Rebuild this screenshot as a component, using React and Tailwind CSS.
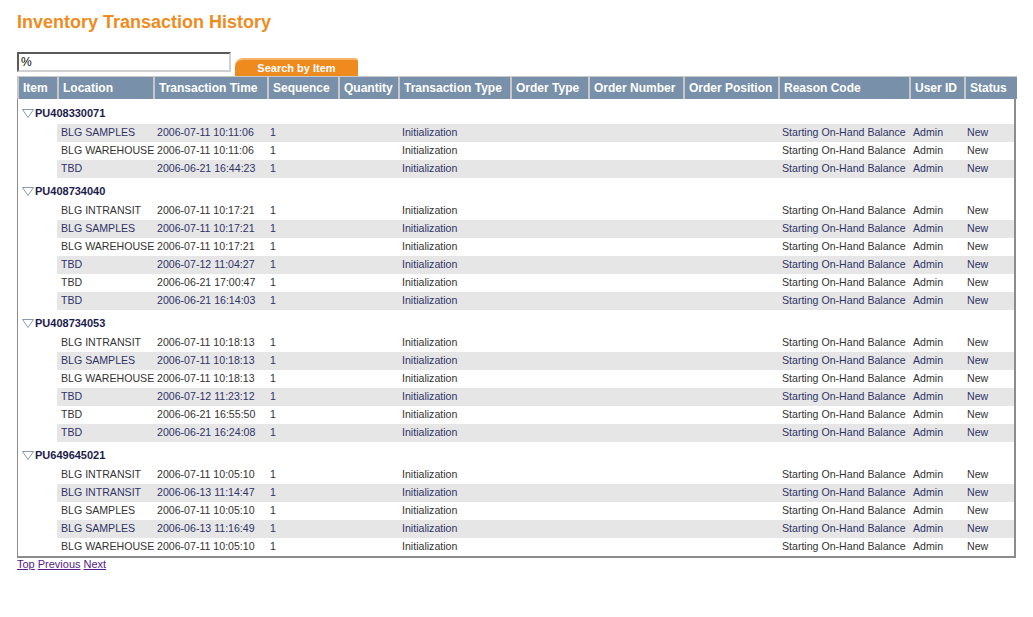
import React from "react";

const columns = [
    { label: "Item", w: 40 },
    { label: "Location", w: 96 },
    { label: "Transaction Time", w: 114 },
    { label: "Sequence", w: 71 },
    { label: "Quantity", w: 60 },
    { label: "Transaction Type", w: 112 },
    { label: "Order Type", w: 78 },
    { label: "Order Number", w: 95 },
    { label: "Order Position", w: 95 },
    { label: "Reason Code", w: 131 },
    { label: "User ID", w: 55 },
    { label: "Status", w: 52 },
];

const groups = [
    {
        item: "PU408330071",
        rows: [
            ["BLG SAMPLES", "2006-07-11 10:11:06"],
            ["BLG WAREHOUSE", "2006-07-11 10:11:06"],
            ["TBD", "2006-06-21 16:44:23"],
        ],
    },
    {
        item: "PU408734040",
        rows: [
            ["BLG INTRANSIT", "2006-07-11 10:17:21"],
            ["BLG SAMPLES", "2006-07-11 10:17:21"],
            ["BLG WAREHOUSE", "2006-07-11 10:17:21"],
            ["TBD", "2006-07-12 11:04:27"],
            ["TBD", "2006-06-21 17:00:47"],
            ["TBD", "2006-06-21 16:14:03"],
        ],
    },
    {
        item: "PU408734053",
        rows: [
            ["BLG INTRANSIT", "2006-07-11 10:18:13"],
            ["BLG SAMPLES", "2006-07-11 10:18:13"],
            ["BLG WAREHOUSE", "2006-07-11 10:18:13"],
            ["TBD", "2006-07-12 11:23:12"],
            ["TBD", "2006-06-21 16:55:50"],
            ["TBD", "2006-06-21 16:24:08"],
        ],
    },
    {
        item: "PU649645021",
        rows: [
            ["BLG INTRANSIT", "2006-07-11 10:05:10"],
            ["BLG INTRANSIT", "2006-06-13 11:14:47"],
            ["BLG SAMPLES", "2006-07-11 10:05:10"],
            ["BLG SAMPLES", "2006-06-13 11:16:49"],
            ["BLG WAREHOUSE", "2006-07-11 10:05:10"],
        ],
    },
];

// body sits inside a 1px left / 2px right border, so trim the outer columns
const bodyWidths = columns.map((c, i) => (i === 0 ? c.w - 1 : i === columns.length - 1 ? c.w - 2 : c.w));

function Triangle() {
    return (
        <svg width="12" height="9" viewBox="0 0 12 9" className="shrink-0">
            <polygon points="0.5,0.5 11.5,0.5 6,8.5" fill="none" stroke="#8a97b0" strokeWidth="1" />
        </svg>
    );
}

export default function App() {
    let idx = 0;
    return (
        <div className="min-h-[617px] bg-white pl-[17px] pt-[10px] font-['Liberation_Sans',Arial,sans-serif]">
            {/* Title */}
            <h1 className="text-[18px] leading-[24px] font-bold text-[#f08c1e]">Inventory Transaction History</h1>

            {/* Search */}
            <div className="mt-[18px] flex items-end">
                <div className="mb-[4px] h-[20px] w-[214px] border-2 border-t-[#5a5a5a] border-l-[#5a5a5a] border-r-[#d0d0d0] border-b-[#d0d0d0] bg-white pl-[2px] text-[12px] leading-[16px] text-black">
                    %
                </div>
                <div className="ml-[4px] flex h-[18px] w-[123px] items-center justify-center rounded-tl-[8px] rounded-tr-[3px] border-t-2 border-[#f7b36a] bg-[#ef8a1f] text-[11px] font-bold text-white">
                    Search by Item
                </div>
            </div>

            {/* Header */}
            <table className="w-[999px] table-fixed border-collapse">
                <colgroup>
                    {columns.map((c) => (
                        <col key={c.label} style={{ width: c.w }} />
                    ))}
                </colgroup>
                <thead>
                    <tr>
                        {columns.map((c) => (
                            <th
                                key={c.label}
                                className="h-[22px] border-l-2 border-t border-[#c8c8c8] bg-[#7890aa] pl-[4px] text-left text-[12px] font-bold whitespace-nowrap text-white"
                            >
                                {c.label}
                            </th>
                        ))}
                    </tr>
                </thead>
            </table>

            {/* Body */}
            <div className="w-[999px] border-b-2 border-l border-r-2 border-[#8c8c8c] pt-[1px]">
                <table className="w-full table-fixed border-collapse text-[10.6px]">
                    <colgroup>
                        {bodyWidths.map((w, i) => (
                            <col key={i} style={{ width: w }} />
                        ))}
                    </colgroup>
                    <tbody>
                        {groups.map((g) => (
                            <React.Fragment key={g.item}>
                                <tr>
                                    <td colSpan={12} className="h-[24px] pt-[3px]">
                                        <div className="flex items-center gap-[1px] pl-[4px]">
                                            <Triangle />
                                            <span className="text-[11px] font-bold text-[#1c1c4c]">{g.item}</span>
                                        </div>
                                    </td>
                                </tr>
                                {g.rows.map(([loc, time]) => {
                                    const shaded = idx++ % 2 === 0;
                                    const cell = shaded ? "bg-[#e6e6e6] text-[#2f3466]" : "text-[#333333]";
                                    return (
                                        <tr key={loc + time} className="h-[18px]">
                                            <td />
                                            <td className={`pl-[4px] whitespace-nowrap ${cell}`}>{loc}</td>
                                            <td className={`pl-[4px] whitespace-nowrap ${cell}`}>{time}</td>
                                            <td className={`pl-[3px] ${cell}`}>1</td>
                                            <td className={cell} />
                                            <td className={`pl-[4px] ${cell}`}>Initialization</td>
                                            <td className={cell} />
                                            <td className={cell} />
                                            <td className={cell} />
                                            <td className={`pl-[4px] whitespace-nowrap ${cell}`}>Starting On-Hand Balance</td>
                                            <td className={`pl-[4px] ${cell}`}>Admin</td>
                                            <td className={`pl-[3px] ${cell}`}>New</td>
                                        </tr>
                                    );
                                })}
                            </React.Fragment>
                        ))}
                    </tbody>
                </table>
            </div>

            {/* Footer links */}
            <div className="flex gap-[3px] text-[11px] leading-[13px] text-[#551a8b]">
                <a href="#" className="underline">Top</a>
                <a href="#" className="underline">Previous</a>
                <a href="#" className="underline">Next</a>
            </div>
        </div>
    );
}
